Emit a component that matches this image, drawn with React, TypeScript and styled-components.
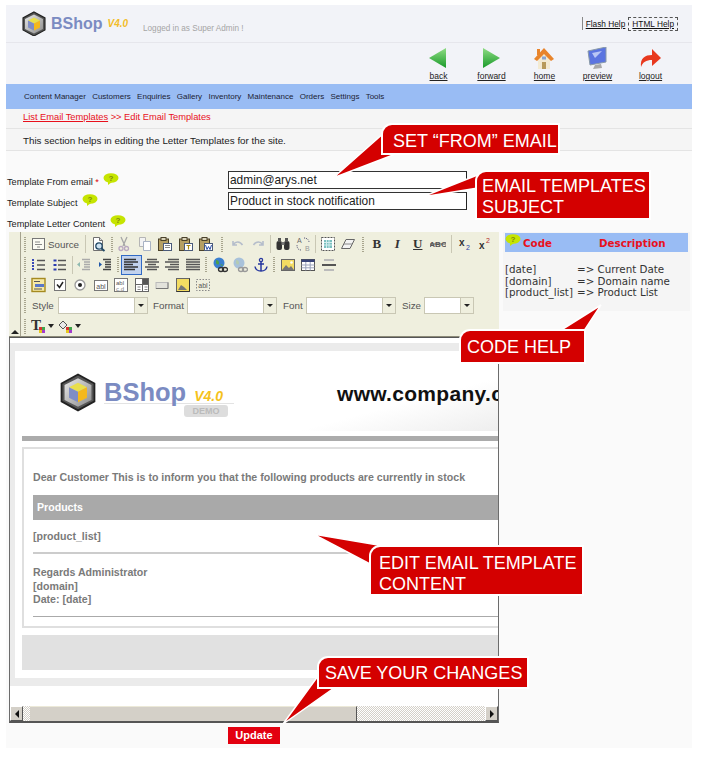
import React from "react";
import styled, { createGlobalStyle } from "styled-components";

const GlobalStyle = createGlobalStyle`
  html, body { margin: 0; padding: 0; background: #fff; }
  body { font-family: "Liberation Sans", Arial, sans-serif; color: #222; }
  * { box-sizing: border-box; }
`;

function Hexagon({ size }: { size: number }): JSX.Element {
  return (
    <svg width={size} height={size * 1.08} viewBox="0 0 24 26">
      <defs>
        <linearGradient id={`hex${size}`} x1="0" y1="0" x2="1" y2="1">
          <stop offset="0" stopColor="#e8e8e8" />
          <stop offset="1" stopColor="#8d8d8d" />
        </linearGradient>
      </defs>
      <polygon points="12,1 23,7 23,19 12,25 1,19 1,7" fill="#555" stroke="#222" strokeWidth="1.2" />
      <polygon points="12,3.5 21,8 21,18 12,22.5 3,18 3,8" fill={`url(#hex${size})`} />
      <polygon points="12,6.5 18,9.5 12,12.5 6,9.5" fill="#e9df4c" />
      <polygon points="6,9.5 12,12.5 12,19.5 6,16.5" fill="#7f8dc6" />
      <polygon points="18,9.5 12,12.5 12,19.5 18,16.5" fill="#f4b81c" />
    </svg>
  );
}

function HelpBubble(): JSX.Element {
  return (
    <BubbleSvg width="16" height="12" viewBox="0 0 16 12">
      <ellipse cx="8" cy="5" rx="7.5" ry="4.8" fill="#c6e400" />
      <polygon points="5,8 9,9 5,12" fill="#c6e400" />
      <text x="8" y="8" fontSize="8" fontWeight="700" textAnchor="middle" fill="#7d8a10" fontFamily="Liberation Sans">?</text>
    </BubbleSvg>
  );
}

const page = (fold = true) => (
  <>
    <path d="M3.5 1.5h6l3 3v10h-9z" fill="#fff" stroke="#6f6f6f" />
    {fold && <path d="M9.5 1.5v3h3" fill="#ddd" stroke="#6f6f6f" />}
  </>
);

const clipboard = (mark: React.ReactNode) => (
  <>
    <rect x="1.5" y="3" width="10" height="11.5" fill="#b59f63" stroke="#4a412a" />
    <rect x="4" y="1.5" width="5" height="3" fill="#d9d3b8" stroke="#4a412a" />
    <rect x="6.5" y="7.5" width="8" height="7" fill="#fff" stroke="#4a5a7a" />
    {mark}
  </>
);

const lines = (rows: [number, number][], color = "#555") => (
  <path d={rows.map(([x, y], i) => `M${x} ${2.5 + i * 2.5}H${y}`).join("")} stroke={color} strokeWidth="1.4" fill="none" />
);

const fieldBox = (body: React.ReactNode) => (
  <>
    <rect x="1.5" y="3.5" width="13" height="10" fill="#fff" stroke="#777" />
    {body}
  </>
);

const ICONS: Record<string, React.ReactNode> = {
  source: (
    <>
      <rect x="1.5" y="2.5" width="12" height="11" fill="#fbfbf4" stroke="#777" />
      <path d="M4 6h5M4 8.5h7M6 11h3" stroke="#888" />
    </>
  ),
  preview: (
    <>
      {page()}
      <circle cx="9" cy="10" r="3.2" fill="#cfe3f2" stroke="#244a66" strokeWidth="1.3" />
      <path d="M11.5 12.5l3 2.5" stroke="#244a66" strokeWidth="2" />
    </>
  ),
  cut: (
    <>
      <path d="M5 1l4 9M11 1l-4 9" stroke="#a6a6a6" strokeWidth="1.3" />
      <circle cx="5" cy="12.5" r="2" fill="none" stroke="#b9a8c0" strokeWidth="1.3" />
      <circle cx="10.5" cy="12.5" r="2" fill="none" stroke="#b9a8c0" strokeWidth="1.3" />
    </>
  ),
  copy: (
    <>
      <path d="M2.5 1.5h6v9h-6z" fill="#f3f3f3" stroke="#b5b5b5" />
      <path d="M6.5 5.5h7v9h-7z" fill="#fff" stroke="#a9b3c4" />
    </>
  ),
  paste: clipboard(<path d="M8 9.5h5M8 11.5h5" stroke="#888" />),
  pasteText: clipboard(<path d="M8.5 9.5h4M10.5 9.5v4" stroke="#a98a10" strokeWidth="1.2" />),
  pasteWord: clipboard(<path d="M7.5 9l1.5 4.5 1.5-3 1.5 3 1.5-4.5" stroke="#2c4fa8" fill="none" />),
  undo: <path d="M3 5v4h4M3.5 8.5c2-3.5 6.5-3.5 9 .5" fill="none" stroke="#b5bdcb" strokeWidth="1.6" />,
  redo: <path d="M13 5v4H9M12.5 8.5c-2-3.5-6.5-3.5-9 .5" fill="none" stroke="#b5bdcb" strokeWidth="1.6" />,
  find: (
    <>
      <rect x="1.5" y="5" width="5.5" height="9" rx="2" fill="#333" />
      <rect x="9" y="5" width="5.5" height="9" rx="2" fill="#333" />
      <rect x="3" y="2" width="3" height="4" fill="#555" />
      <rect x="10" y="2" width="3" height="4" fill="#555" />
      <rect x="6.5" y="6" width="3" height="3" fill="#777" />
    </>
  ),
  replace: (
    <>
      <text x="2" y="7" fontSize="7" fill="#666" fontFamily="Liberation Sans">A</text>
      <text x="10" y="15" fontSize="7" fill="#999" fontFamily="Liberation Sans">B</text>
      <path d="M9 2c3 0 5 2 5 4M6 14c-3 0-4-2-4-5" fill="none" stroke="#557" strokeDasharray="1 1" />
    </>
  ),
  selectAll: (
    <>
      <rect x="1.5" y="1.5" width="13" height="13" fill="#fff" stroke="#555" strokeDasharray="2 1" />
      <rect x="4" y="4" width="8" height="8" fill="#7cc0c0" />
      <path d="M4 6.5h8M4 9h8M6.5 4v8M9 4v8" stroke="#d3eded" />
    </>
  ),
  eraser: (
    <>
      <path d="M6 3.5h8.5L10 12.5H1.5z" fill="#f3f3f3" stroke="#666" />
      <path d="M4 8h8" stroke="#888" />
    </>
  ),
  abc: (
    <>
      <text x="8" y="11" fontSize="8" fontWeight="700" fill="#555" textAnchor="middle" fontFamily="Liberation Sans">ABC</text>
      <path d="M0 8h16" stroke="#555" />
    </>
  ),
  sub: (
    <>
      <text x="2" y="10" fontSize="10" fontWeight="700" fill="#333" fontFamily="Liberation Sans">x</text>
      <text x="9" y="14" fontSize="7" fill="#2a3fa8" fontFamily="Liberation Sans">2</text>
    </>
  ),
  sup: (
    <>
      <text x="2" y="13" fontSize="10" fontWeight="700" fill="#333" fontFamily="Liberation Sans">x</text>
      <text x="9" y="7" fontSize="7" fill="#b02a2a" fontFamily="Liberation Sans">2</text>
    </>
  ),
  ol: (
    <>
      <path d="M2 2v11" stroke="#3a49b8" strokeWidth="2" strokeDasharray="2 1" />
      <path d="M6 3.5h8M6 8h8M6 12.5h8" stroke="#555" strokeWidth="1.4" />
    </>
  ),
  ul: (
    <>
      <path d="M1.5 2.5h3v2h-3zM1.5 7h3v2h-3zM1.5 11.5h3v2h-3z" fill="#2c3cb0" />
      <path d="M6 3.5h8M6 8h8M6 12.5h8" stroke="#555" strokeWidth="1.4" />
    </>
  ),
  outdent: (
    <>
      {lines([[6, 14], [8, 14], [8, 14], [8, 14], [6, 14]], "#aaa")}
      <path d="M1 7.5l3-2.5v5z" fill="#8fb9b0" />
    </>
  ),
  indent: (
    <>
      {lines([[6, 14], [8, 14], [8, 14], [8, 14], [6, 14]], "#444")}
      <path d="M5 7.5L2 5v5z" fill="#1f56a8" />
    </>
  ),
  left: lines([[1, 13], [1, 15], [1, 10], [1, 15], [1, 12]], "#333"),
  center: lines([[3, 13], [1, 15], [4, 12], [1, 15], [3, 13]]),
  right: lines([[4, 15], [1, 15], [6, 15], [1, 15], [4, 15]]),
  justify: lines([[1, 15], [1, 15], [1, 15], [1, 15], [1, 15]]),
  link: (
    <>
      <circle cx="7" cy="6" r="5.5" fill="#3a7fd0" />
      <path d="M4 3c2 0 3 1 3 3s-2 2-3 0M8 8c2-2 3 0 3 1" fill="#4ea04a" />
      <ellipse cx="9" cy="12.5" rx="2.5" ry="2" fill="none" stroke="#333" strokeWidth="1.3" />
      <ellipse cx="13" cy="12.5" rx="2.5" ry="2" fill="none" stroke="#333" strokeWidth="1.3" />
    </>
  ),
  unlink: (
    <>
      <circle cx="7" cy="6" r="5.5" fill="#a9c2da" />
      <path d="M4 3c2 0 3 1 3 3s-2 2-3 0" fill="#b4cbb2" />
      <ellipse cx="9" cy="12.5" rx="2.5" ry="2" fill="none" stroke="#999" strokeWidth="1.3" />
      <ellipse cx="13" cy="12.5" rx="2.5" ry="2" fill="none" stroke="#999" strokeWidth="1.3" />
    </>
  ),
  anchor: (
    <>
      <circle cx="8" cy="3" r="1.6" fill="none" stroke="#2738a0" strokeWidth="1.3" />
      <path d="M8 4.5V14M5 7h6M2 9.5c.5 3 3 4.5 6 4.5s5.500-1.500 6-4.500" fill="none" stroke="#2738a0" strokeWidth="1.5" />
    </>
  ),
  image: (
    <>
      <rect x="1.5" y="2.500" width="13" height="11" fill="#f3dc62" stroke="#666" />
      <path d="M2 13l4-5 3 3 2-2 3 4z" fill="#777" />
      <circle cx="11.500" cy="5.500" r="1.300" fill="#fff" />
    </>
  ),
  table: (
    <>
      <rect x="1.500" y="2.500" width="13" height="11" fill="#fff" stroke="#555" />
      <rect x="1.500" y="2.500" width="13" height="2.500" fill="#39457a" />
      <path d="M1.500 8h13M1.500 10.800h13M5.800 5v8.500M10.200 5v8.500" stroke="#9aa3bb" />
    </>
  ),
  rule: (
    <>
      <path d="M3 3h10M3 13h10" stroke="#bbb" strokeWidth="2" />
      <path d="M1 8h14" stroke="#555" strokeWidth="2" />
    </>
  ),
  form: (
    <>
      <rect x="1" y="1.500" width="13" height="13" fill="#f6e9a6" stroke="#a58a20" strokeWidth="1.400" />
      <path d="M3 4.500h6" stroke="#555" />
      <rect x="4" y="7" width="9" height="3" fill="#5a78c8" />
      <path d="M3 12h8" stroke="#555" />
    </>
  ),
  checkbox: (
    <>
      <rect x="2.500" y="2.500" width="11" height="11" fill="#fff" stroke="#777" />
      <path d="M5 7.500l2.500 3 3.500-5.500" fill="none" stroke="#222" strokeWidth="1.500" />
    </>
  ),
  radio: (
    <>
      <circle cx="8" cy="8" r="5" fill="#fff" stroke="#999" strokeWidth="1.300" />
      <circle cx="8" cy="8" r="2" fill="#222" />
    </>
  ),
  textField: fieldBox(<text x="8" y="11.500" fontSize="7" textAnchor="middle" fill="#555" fontFamily="Liberation Sans">abl</text>),
  textArea: (
    <>
      <rect x="1.500" y="1.500" width="13" height="13" fill="#fff" stroke="#777" />
      <text x="7" y="7.500" fontSize="6" textAnchor="middle" fill="#555" fontFamily="Liberation Sans">abl</text>
      <text x="7" y="13.500" fontSize="6" textAnchor="middle" fill="#888" fontFamily="Liberation Sans">c.d</text>
    </>
  ),
  select: (
    <>
      <rect x="1.500" y="1.500" width="13" height="13" fill="#fff" stroke="#666" />
      <rect x="9" y="2" width="5" height="5" fill="#555" />
      <path d="M1.500 7.500h13M8.500 1.500v13" stroke="#666" />
      <path d="M3.500 10h3M3.500 12.500h3M10.500 10h3M10.500 12.500h3" stroke="#888" />
    </>
  ),
  button: (
    <>
      <rect x="2" y="5.500" width="12" height="6" fill="#e3e3dc" stroke="#bbb" />
      <path d="M2 11.500h12v-6" fill="none" stroke="#777" />
    </>
  ),
  imageButton: (
    <>
      <rect x="1.500" y="1.500" width="13" height="13" fill="#f3dc62" stroke="#666" />
      <path d="M3 13l3-5 3 2 3 3z" fill="#777" />
      <path d="M14.500 1.500v13h-13" fill="none" stroke="#333" />
    </>
  ),
  hidden: (
    <>
      <rect x="1.500" y="2.500" width="13" height="11" fill="none" stroke="#888" strokeDasharray="1.500 1.500" />
      <text x="8" y="11" fontSize="7" textAnchor="middle" fill="#555" fontFamily="Liberation Sans">abl</text>
    </>
  ),
  textColor: (
    <>
      <text x="0" y="12" fontSize="15" fontWeight="700" fill="#333" fontFamily="Liberation Serif">T</text>
      <path d="M8 9h3v3H8z" fill="#d8332f" />
      <path d="M11 9h3v3h-3z" fill="#3ea54a" />
      <path d="M8 12h3v3H8z" fill="#e6c81d" />
      <path d="M11 12h3v3h-3z" fill="#a33ccc" />
    </>
  ),
  bgColor: (
    <>
      <path d="M1 7l4-4 4 4-4 4z" fill="#e8e8e8" stroke="#555" />
      <path d="M8 9h3v3H8z" fill="#d8332f" />
      <path d="M11 9h3v3h-3z" fill="#3ea54a" />
      <path d="M8 12h3v3H8z" fill="#e6c81d" />
      <path d="M11 12h3v3h-3z" fill="#a33ccc" />
    </>
  ),
};

function ToolIcon({ name }: { name: string }): JSX.Element {
  return (
    <svg width="16" height="16" viewBox="0 0 16 16">
      {ICONS[name]}
    </svg>
  );
}

function ToolRun({ names }: { names: string[] }): JSX.Element {
  return (
    <>
      {names.map((name) => (
        <Tool key={name}>
          <ToolIcon name={name} />
        </Tool>
      ))}
    </>
  );
}

function Combo({ label, gap, labelWidth, width }: { label: string; gap: number; labelWidth: number; width: number }): JSX.Element {
  return (
    <>
      <ComboLabel $gap={gap} $width={labelWidth}>{label}</ComboLabel>
      <ComboBox $width={width}>
        <ComboArrow />
      </ComboBox>
    </>
  );
}

function Arrow(): JSX.Element {
  return (
    <svg width="6" height="4" viewBox="0 0 6 4">
      <polygon points="0,0 6,0 3,4" fill="#222" />
    </svg>
  );
}

const NAV = [
  {
    label: "back",
    icon: (
      <>
        <defs>
          <linearGradient id="navBack" x1="0" y1="0" x2="0" y2="1">
            <stop offset="0" stopColor="#8fdc84" />
            <stop offset="1" stopColor="#199a2a" />
          </linearGradient>
        </defs>
        <polygon points="1,11 18,1 18,21" fill="url(#navBack)" />
      </>
    ),
  },
  {
    label: "forward",
    icon: (
      <>
        <defs>
          <linearGradient id="navFwd" x1="0" y1="0" x2="0" y2="1">
            <stop offset="0" stopColor="#8fdc84" />
            <stop offset="1" stopColor="#199a2a" />
          </linearGradient>
        </defs>
        <polygon points="2,1 19,11 2,21" fill="url(#navFwd)" />
      </>
    ),
  },
  {
    label: "home",
    icon: (
      <>
        <polygon points="4,11 10,5 16,11 16,22 4,22" fill="#f3ead2" />
        <polygon points="0,12 10,1 20,12 17,14 10,7 3,14" fill="#e8842c" />
        <rect x="3" y="2" width="3" height="6" fill="#e8842c" />
        <rect x="8" y="15" width="4" height="7" fill="#b89a5a" />
        <rect x="8" y="9.500" width="4" height="3" fill="#8aa4d0" />
      </>
    ),
  },
  {
    label: "preview",
    icon: (
      <>
        <polygon points="1,4 19,0 19,15 3,18" fill="#5b74e0" stroke="#8a9aa8" />
        <polygon points="5,6 15,4 8,11" fill="#b9c6f5" />
        <polygon points="8,18 14,17 15,21 6,22" fill="#a8a8a8" />
      </>
    ),
  },
  {
    label: "logout",
    icon: <path d="M1 20C0 11 5 8 12 8V2l9 9-9 8v-6C6 13 3 15 1 20z" fill="#e8381e" />,
  },
];

function App(): JSX.Element {
  return (
    <Page>
      <GlobalStyle />
      <Panel>
        <TopBar>
          <Brand>
            <Hexagon size={24} />
            <BrandName>BShop</BrandName>
            <BrandVersion>V4.0</BrandVersion>
          </Brand>
          <LoggedIn>Logged in as Super Admin !</LoggedIn>
          <HelpLinks>
            <HelpLink>Flash Help</HelpLink>
            <HelpLink $active>HTML Help</HelpLink>
          </HelpLinks>
        </TopBar>
        <IconNav>
          {NAV.map((item) => (
            <NavItem key={item.label}>
              <svg width="22" height="23" viewBox="0 0 22 23">
                {item.icon}
              </svg>
              <NavLabel>{item.label}</NavLabel>
            </NavItem>
          ))}
        </IconNav>
        <MenuBar>
          {["Content Manager", "Customers", "Enquiries", "Gallery", "Inventory", "Maintenance", "Orders", "Settings", "Tools"].map((m) => (
            <MenuItem key={m}>{m}</MenuItem>
          ))}
        </MenuBar>
        <Breadcrumb>
          <CrumbLink>List Email Templates</CrumbLink> &gt;&gt; Edit Email Templates
        </Breadcrumb>
        <Intro>This section helps in editing the Letter Templates for the site.</Intro>
        <FormGrid>
          <FieldLabel>
            Template From email <Req>*</Req> <HelpBubble />
          </FieldLabel>
          <TextBox>admin@arys.net</TextBox>
          <FieldLabel>
            Template Subject <HelpBubble />
          </FieldLabel>
          <TextBox>Product in stock notification</TextBox>
          <ContentLabel>
            Template Letter Content <HelpBubble />
          </ContentLabel>
        </FormGrid>
        <EditorRow>
          <Editor>
            <Toolbar>
              <Collapse>
                <CollapseArrow />
              </Collapse>
              <ToolRows>
                <ToolRow>
                  <Grip $w={8} />
                  <SourceButton>
                    <ToolIcon name="source" />
                    Source
                  </SourceButton>
                  <Sep $w={4} />
                  <Tool $w={22}>
                    <ToolIcon name="preview" />
                  </Tool>
                  <Grip $w={5} />
                  <ToolRun names={["cut", "copy", "paste", "pasteText", "pasteWord"]} />
                  <Grip $w={11} />
                  <ToolRun names={["undo", "redo"]} />
                  <Sep $w={4} />
                  <ToolRun names={["find", "replace"]} />
                  <Sep $w={4} />
                  <ToolRun names={["selectAll", "eraser"]} />
                  <Grip $w={8} />
                  <Tool><BoldMark>B</BoldMark></Tool>
                  <Tool><ItalicMark>I</ItalicMark></Tool>
                  <Tool><UnderMark>U</UnderMark></Tool>
                  <Tool><ToolIcon name="abc" /></Tool>
                  <Sep $w={6} />
                  <ToolRun names={["sub", "sup"]} />
                </ToolRow>
                <ToolRow>
                  <Grip $w={8} />
                  <ToolRun names={["ol", "ul"]} />
                  <Sep $w={4} />
                  <ToolRun names={["outdent", "indent"]} />
                  <Grip $w={6} />
                  <ActiveTool>
                    <ToolIcon name="left" />
                  </ActiveTool>
                  <ToolRun names={["center", "right", "justify"]} />
                  <Grip $w={6.5} />
                  <ToolRun names={["link", "unlink", "anchor"]} />
                  <Grip $w={6.5} />
                  <ToolRun names={["image", "table", "rule"]} />
                </ToolRow>
                <ToolRow>
                  <Grip $w={8} />
                  <ToolRun names={["form", "checkbox", "radio", "textField", "textArea", "select", "button", "imageButton", "hidden"]} />
                </ToolRow>
                <ToolRow>
                  <Grip $w={8} />
                  <Combo label="Style" gap={3} labelWidth={26} width={90} />
                  <Combo label="Format" gap={5} labelWidth={34} width={90} />
                  <Combo label="Font" gap={6} labelWidth={23} width={90} />
                  <Combo label="Size" gap={6} labelWidth={22} width={50} />
                </ToolRow>
                <ToolRow>
                  <Grip $w={8} />
                  <ColorTool>
                    <ToolIcon name="textColor" />
                    <Arrow />
                  </ColorTool>
                  <ColorTool>
                    <ToolIcon name="bgColor" />
                    <Arrow />
                  </ColorTool>
                </ToolRow>
              </ToolRows>
            </Toolbar>
            <Frame>
              <FrameScroll>
                <MailSheet>
                  <MailInner>
                    <MailHead>
                      <MailBrand>
                        <Hexagon size={36} />
                        <MailBrandText>
                          <MailBrandLine>
                            <MailName>BShop</MailName>
                            <MailVersion>V4.0</MailVersion>
                          </MailBrandLine>
                          <DemoPill>DEMO</DemoPill>
                        </MailBrandText>
                      </MailBrand>
                      <MailSite>www.company.com</MailSite>
                    </MailHead>
                    <MailRule />
                    <MailBox>
                      <MailLine>Dear Customer This is to inform you that the following products are currently in stock</MailLine>
                      <ProductsBar>Products</ProductsBar>
                      <ProductList>[product_list]</ProductList>
                      <ThickHr />
                      <Signature>
                        Regards Administrator
                        <br />
                        [domain]
                        <br />
                        Date: [date]
                      </Signature>
                      <ThinHr />
                    </MailBox>
                    <MailFooter />
                  </MailInner>
                </MailSheet>
              </FrameScroll>
              <ScrollBar>
                <ScrollButton>
                  <ArrowLeft />
                </ScrollButton>
                <ScrollDither $w={7} />
                <ScrollThumb />
                <ScrollDither $w={128} />
                <ScrollButton>
                  <ArrowRight />
                </ScrollButton>
              </ScrollBar>
            </Frame>
          </Editor>
          <CodeHelp>
            <CodeHead>
              <CodeBubble>
                <HelpBubble />
              </CodeBubble>
              <CodeTitle>Code</CodeTitle>
              <DescTitle>Description</DescTitle>
            </CodeHead>
            <CodeList>
              <CodeKey>[date]</CodeKey>
              <span>=&gt; Current Date</span>
              <CodeKey>[domain]</CodeKey>
              <span>=&gt; Domain name</span>
              <CodeKey>[product_list]</CodeKey>
              <span>=&gt; Product List</span>
            </CodeList>
          </CodeHelp>
        </EditorRow>
        <UpdateRow>
          <UpdateButton>Update</UpdateButton>
        </UpdateRow>
      </Panel>

      <Tails viewBox="0 0 702 759" width="702" height="759">
        <polygon points="385,132 333,178 393,155" />
        <polygon points="480,174 422,197 478,188" />
        <polygon points="558,332 601,305 582,334" />
        <polygon points="378,545 313,534 370,564" />
        <polygon points="318,676 283,724 334,688" />
      </Tails>
      <Callout $x={383} $y={125} $w={175} $h={28} $px={10} $py={6}>SET “FROM” EMAIL</Callout>
      <Callout $x={477} $y={172} $w={172} $h={46} $px={5} $py={4}>EMAIL TEMPLATES<br />SUBJECT</Callout>
      <Callout $x={461} $y={331} $w={123} $h={31} $px={6} $py={6}>CODE HELP</Callout>
      <Callout $x={371} $y={547} $w={211} $h={47} $px={8} $py={6}>EDIT EMAIL TEMPLATE<br />CONTENT</Callout>
      <Callout $x={319} $y={658} $w={208} $h={29} $px={6} $py={5}>SAVE YOUR CHANGES</Callout>
    </Page>
  );
}

export default App;

const Page = styled.div`
  position: relative;
  width: 702px;
  height: 759px;
  padding: 5px 10px 0 6px;
  overflow: hidden;
`;

const Panel = styled.div`
  height: 743px;
  background: #fafafa;
  font-size: 9px;
`;

const TopBar = styled.div`
  display: flex;
  align-items: center;
  height: 38px;
  padding-left: 16px;
  padding-right: 14px;
  background: #f2f3f8;
  border-bottom: 1px solid #e6e6ec;
`;

const Brand = styled.div`
  display: flex;
  align-items: center;
  width: 121px;
`;

const BrandName = styled.span`
  margin-left: 5px;
  font-size: 16px;
  font-weight: 700;
  color: #7b8bc2;
`;

const BrandVersion = styled.span`
  margin-left: 5px;
  font-size: 10px;
  font-weight: 700;
  font-style: italic;
  color: #f2bd2a;
`;

const LoggedIn = styled.span`
  flex: 1;
  margin-top: 9px;
  font-size: 8.2px;
  color: #a5a5a5;
`;

const HelpLinks = styled.div`
  display: flex;
  align-items: center;
  height: 13px;
  margin-top: 0;
  border-left: 1px solid #888;
  padding-left: 3px;
  gap: 3px;
`;

const HelpLink = styled.span<{ $active?: boolean }>`
  padding: 1px ${(p) => (p.$active ? "3px" : "0")};
  font-size: 8.3px;
  text-decoration: underline;
  color: #111;
  border: ${(p) => (p.$active ? "1px dashed #555" : "0")};
`;

const IconNav = styled.div`
  display: flex;
  justify-content: flex-end;
  height: 41px;
  padding-right: 15px;
  background: #f2f3f8;
`;

const NavItem = styled.div`
  display: flex;
  flex-direction: column;
  align-items: center;
  width: 53px;
  padding-top: 4px;
`;

const NavLabel = styled.span`
  margin-top: 1px;
  font-size: 8.5px;
  color: #222;
  text-decoration: underline;
`;

const MenuBar = styled.div`
  display: flex;
  align-items: center;
  gap: 6.3px;
  height: 25px;
  padding-left: 18px;
  background: #99bcf4;
`;

const MenuItem = styled.span`
  font-size: 8px;
  color: #1c2333;
`;

const Breadcrumb = styled.div`
  height: 20px;
  padding: 3px 0 0 17px;
  font-size: 9.3px;
  color: #e8101c;
  background: #f5f5f5;
  border-bottom: 1px solid #e4e4e4;
`;

const CrumbLink = styled.span`
  text-decoration: underline;
`;

const Intro = styled.div`
  height: 22px;
  padding: 6px 0 0 17px;
  font-size: 9.8px;
  color: #222;
  background: #f5f5f5;
  border-bottom: 1px solid #e4e4e4;
`;

const FormGrid = styled.div`
  display: grid;
  grid-template-columns: 222px 238px;
  grid-auto-rows: 18px;
  row-gap: 3px;
  padding: 20px 0 0 1px;
`;

const FieldLabel = styled.div`
  align-self: center;
  font-size: 9.2px;
  color: #222;
`;

const ContentLabel = styled(FieldLabel)`
  grid-column: 1 / -1;
`;

const Req = styled.span`
  color: #d00;
`;

const BubbleSvg = styled.svg`
  margin-left: 2px;
  vertical-align: 0;
`;

const TextBox = styled.div`
  height: 18px;
  margin-left: -1px;
  padding: 1px;
  background: #fff;
  border: 1px solid #333;
  border-right-color: #222;
  font-size: 11.9px;
  line-height: 15px;
  color: #222;
`;

const EditorRow = styled.div`
  display: flex;
  align-items: flex-start;
  gap: 4px;
  margin-top: 1px;
  padding-left: 3px;
`;

const Editor = styled.div`
  display: flex;
  flex-direction: column;
  width: 490px;
  height: 491px;
`;

const Toolbar = styled.div`
  display: flex;
  flex: none;
  height: 105px;
  background: #efefde;
  border-bottom: 1px solid #8c8a78;
`;

const Collapse = styled.div`
  display: flex;
  align-items: flex-end;
  justify-content: center;
  width: 12px;
  padding-bottom: 2px;
  border-right: 1px solid #a5a28e;
`;

const CollapseArrow = styled.div`
  width: 0;
  height: 0;
  border-left: 4px solid transparent;
  border-right: 4px solid transparent;
  border-bottom: 4px solid #222;
`;

const ToolRows = styled.div`
  display: grid;
  flex: 1;
  grid-auto-rows: 20.5px;
  padding-top: 2px;
`;

const ToolRow = styled.div`
  display: flex;
  align-items: center;
`;

const Grip = styled.div<{ $w: number }>`
  display: flex;
  flex: none;
  justify-content: center;
  width: ${(p) => p.$w}px;
  height: 15px;

  &::before {
    content: "";
    width: 2px;
    height: 100%;
    background: repeating-linear-gradient(#a8a58e 0 1px, #efefde 1px 2px);
  }
`;

const Sep = styled.div<{ $w: number }>`
  display: flex;
  flex: none;
  justify-content: center;
  width: ${(p) => p.$w}px;
  height: 18px;

  &::before {
    content: "";
    width: 1px;
    background: #c9c7b4;
  }
`;

const Tool = styled.div<{ $w?: number }>`
  display: flex;
  flex: none;
  align-items: center;
  justify-content: center;
  width: ${(p) => p.$w ?? 20.5}px;
  height: 20px;
`;

const ActiveTool = styled(Tool)`
  background: #c1d2ee;
  border: 1px solid #316ac5;
`;

const SourceButton = styled.div`
  display: flex;
  flex: none;
  align-items: center;
  gap: 1px;
  width: 54px;
  padding-left: 2px;
  font-size: 9.8px;
  color: #555;
`;

const BoldMark = styled.span`
  font-family: "Liberation Serif", serif;
  font-size: 13px;
  font-weight: 700;
  color: #333;
`;

const ItalicMark = styled(BoldMark)`
  font-style: italic;
`;

const UnderMark = styled(BoldMark)`
  text-decoration: underline;
`;

const ComboLabel = styled.span<{ $gap: number; $width: number }>`
  flex: none;
  width: ${(p) => p.$width}px;
  margin-left: ${(p) => p.$gap}px;
  font-size: 9.8px;
  color: #555;
`;

const ComboBox = styled.div<{ $width: number }>`
  display: flex;
  flex: none;
  justify-content: flex-end;
  width: ${(p) => p.$width}px;
  height: 17px;
  background: #fff;
  border: 1px solid #c9c7b4;
`;

const ComboArrow = styled.div`
  position: relative;
  width: 13px;
  background: #efefde;
  border-left: 1px solid #c9c7b4;

  &::after {
    content: "";
    position: absolute;
    top: 6px;
    left: 3px;
    border-left: 3px solid transparent;
    border-right: 3px solid transparent;
    border-top: 3px solid #222;
  }
`;

const ColorTool = styled.div`
  display: flex;
  align-items: center;
  gap: 1px;
  width: 27px;
  padding-left: 2px;
`;

const Frame = styled.div`
  display: flex;
  flex-direction: column;
  flex: 1;
  min-height: 0;
  padding-top: 5px;
  background: #fff;
  border: 1px solid #6c6c6c;
  border-top-color: #555;
  border-bottom: 2px solid #555;
`;

const FrameScroll = styled.div`
  flex: 1;
  min-height: 0;
  overflow: hidden;
`;

const MailSheet = styled.div`
  width: 700px;
  height: 343px;
  padding: 8px 0 8px 5px;
  background: #ebebeb;
  color: #7a7a7a;
  font-weight: 700;
  font-size: 10.6px;
`;

const MailInner = styled.div`
  height: 100%;
  background: #fff;
`;

const MailHead = styled.div`
  display: flex;
  height: 80px;
`;

const MailBrand = styled.div`
  display: flex;
  width: 245px;
  padding: 22px 0 0 45px;
`;

const MailBrandText = styled.div`
  display: flex;
  flex-direction: column;
  margin-left: 8px;
`;

const MailBrandLine = styled.div`
  display: flex;
  align-items: flex-end;
  width: 130px;
  height: 31px;
  border-bottom: 1px solid #e3e3e3;
`;

const MailName = styled.span`
  font-size: 25.5px;
  line-height: 22px;
  color: #7b8bc2;
`;

const MailVersion = styled.span`
  margin-left: 8px;
  font-size: 14px;
  line-height: 14px;
  font-style: italic;
  color: #f5c21b;
`;

const DemoPill = styled.span`
  align-self: flex-end;
  width: 44px;
  height: 12px;
  margin-top: 1px;
  margin-right: 6px;
  border-radius: 3px;
  background: #ddd;
  color: #bbb;
  font-size: 9px;
  line-height: 12px;
  text-align: center;
`;

const MailSite = styled.div`
  flex: 1;
  padding: 31px 0 0 77px;
  background: linear-gradient(165deg, #fff 45%, #dcdcdc 100%);
  font-size: 21px;
  letter-spacing: 0.3px;
  color: #111;
`;

const MailRule = styled.div`
  height: 5px;
  margin: 5px 0 0 7px;
  background: #ababab;
`;

const MailBox = styled.div`
  height: 181px;
  margin: 6px 0 0 7px;
  padding: 22px 0 0 9px;
  background: #fff;
  border: 2px solid #dfdfdf;
  border-right: 0;
`;

const MailLine = styled.div`
  height: 13px;
  line-height: 13px;
`;

const ProductsBar = styled.div`
  height: 25px;
  margin-top: 11px;
  padding-left: 4px;
  line-height: 25px;
  background: #a9a9a9;
  color: #fff;
`;

const ProductList = styled.div`
  margin-top: 10px;
  height: 14px;
`;

const ThickHr = styled.div`
  height: 2px;
  margin-top: 8px;
  background: #ccc;
`;

const Signature = styled.div`
  margin-top: 12px;
  line-height: 13.5px;
`;

const ThinHr = styled.div`
  height: 1px;
  margin-top: 9px;
  background: #aaa;
`;

const MailFooter = styled.div`
  height: 35px;
  margin: 7px 0 0 7px;
  background: #e1e1e1;
`;

const ScrollBar = styled.div`
  display: flex;
  flex: none;
  height: 15px;
  background: #ece9d8;
`;

const ScrollButton = styled.div`
  display: flex;
  flex: none;
  align-items: center;
  justify-content: center;
  width: 13px;
  background: #d4d0c8;
  border: 1px solid;
  border-color: #fff #555 #555 #fff;
`;

const ArrowLeft = styled.div`
  border-top: 4px solid transparent;
  border-bottom: 4px solid transparent;
  border-right: 4px solid #111;
`;

const ArrowRight = styled.div`
  border-top: 4px solid transparent;
  border-bottom: 4px solid transparent;
  border-left: 4px solid #111;
`;

const ScrollDither = styled.div<{ $w: number }>`
  flex: none;
  width: ${(p) => p.$w}px;
  background: repeating-conic-gradient(#fff 0 25%, #d4d0c8 0 50%) 0 0 / 2px 2px;
`;

const ScrollThumb = styled.div`
  flex: 1;
  background: #d4d0c8;
  border-top: 1px solid #ece9d8;
  border-right: 1px solid #555;
`;

const CodeHelp = styled.div`
  width: 187px;
  height: 79px;
  padding: 1px 2px;
  background: #f5f5f5;
  font-family: "DejaVu Sans", Verdana, sans-serif;
  font-size: 10.3px;
  color: #333;
`;

const CodeHead = styled.div`
  display: flex;
  align-items: center;
  height: 19px;
  background: #99bcf4;
  color: #e8101c;
  font-weight: 700;
  font-size: 10.3px;
`;

const CodeBubble = styled.span`
  display: flex;
  width: 20px;
  margin-top: -5px;
  margin-left: -2px;
`;

const CodeTitle = styled.span`
  width: 76px;
`;

const DescTitle = styled.span``;

const CodeList = styled.div`
  display: grid;
  grid-template-columns: 72px auto;
  grid-auto-rows: 11.7px;
  margin-top: 11px;
  white-space: nowrap;
`;

const CodeKey = styled.span``;

const UpdateRow = styled.div`
  padding: 4px 0 0 222px;
`;

const UpdateButton = styled.div`
  width: 52px;
  height: 17px;
  background: #e3000f;
  color: #fff;
  font-size: 11px;
  font-weight: 700;
  line-height: 17px;
  text-align: center;
`;

const Tails = styled.svg`
  position: absolute;
  top: 0;
  left: 0;

  polygon {
    fill: #d40000;
    stroke: #fff;
    stroke-width: 1.5px;
  }
`;

const Callout = styled.div<{ $x: number; $y: number; $w: number; $h: number; $px: number; $py: number }>`
  position: absolute;
  top: ${(p) => p.$y}px;
  left: ${(p) => p.$x}px;
  width: ${(p) => p.$w}px;
  height: ${(p) => p.$h}px;
  padding: ${(p) => p.$py}px 0 0 ${(p) => p.$px}px;
  background: #d40000;
  border-top-left-radius: 9px;
  box-shadow: 0 0 0 2px #fff;
  color: #fff;
  font-size: 18px;
  line-height: 20.5px;
  white-space: nowrap;
`;
